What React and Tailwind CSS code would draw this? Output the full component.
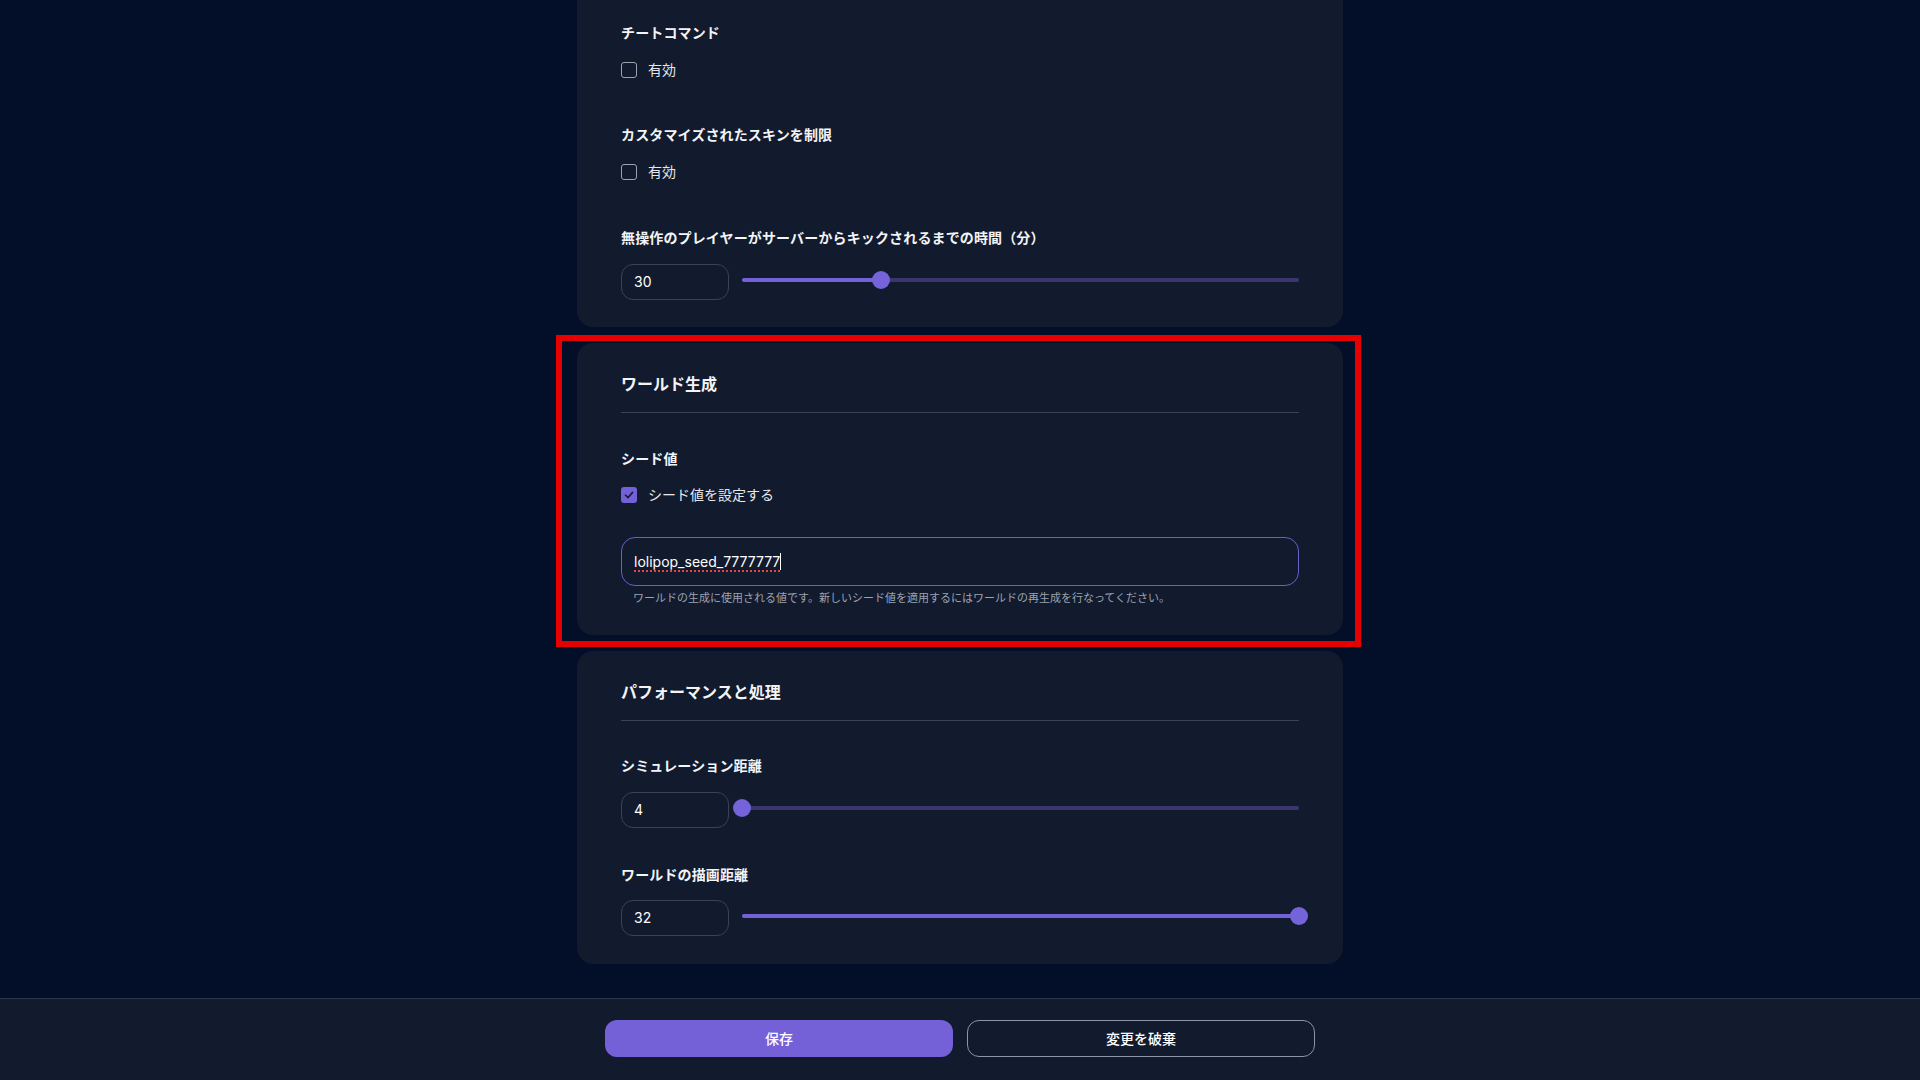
import React, { useState } from 'react';

const FONT = { fontFamily: 'Inter, "Noto Sans CJK JP", sans-serif' };

const Checkbox = ({ checked, onChange, label }) => (
  <label className="flex items-center gap-[11px] h-5 cursor-pointer select-none">
    <span
      onClick={onChange}
      className={
        checked
          ? "w-4 h-4 rounded-[3px] bg-[#7461d8] flex items-center justify-center"
          : "w-4 h-4 rounded-[3px] border-[1.5px] border-[#9ca3af]"
      }
    >
      {checked && (
        <svg width="12" height="12" viewBox="0 0 12 12" fill="none">
          <path d="M2.5 6.2 L5 8.6 L9.6 3.4" stroke="#1b1c3a" strokeWidth="1.6" strokeLinecap="round" strokeLinejoin="round" />
        </svg>
      )}
    </span>
    <span className="text-sm leading-5 text-[#e5e7eb]">{label}</span>
  </label>
);

const Slider = ({ value, min, max }) => {
  const pct = ((value - min) / (max - min)) * 100;
  return (
    <div className="relative flex-1 h-[18px] flex items-center ml-[13px] mb-1">
      <div className="w-full h-1 rounded-full bg-[#3a3770]" />
      <div className="absolute left-0 h-1 rounded-full bg-[#7461d8]" style={{ width: `${pct}%` }} />
      <div
        className="absolute top-1/2 w-[18px] h-[18px] rounded-full bg-[#7563d9] -translate-x-1/2 -translate-y-1/2"
        style={{ left: `${pct}%` }}
      />
    </div>
  );
};

const NumberSlider = ({ value, min, max }) => (
  <div className="flex items-center">
    <div className="w-[108px] h-9 rounded-xl border border-[#394256] px-3 flex items-center text-sm text-white">
      {value}
    </div>
    <Slider value={value} min={min} max={max} />
  </div>
);

const Label = ({ children }) => (
  <div className="text-sm leading-5 font-bold text-[#f3f4f6] tracking-[0.01em]">{children}</div>
);

const CardTitle = ({ children }) => (
  <div className="pb-4 border-b border-[#394154]">
    <h2 className="text-base leading-6 font-bold text-[#f3f4f6]">{children}</h2>
  </div>
);

export default function App() {
  const [cheats, setCheats] = useState(false);
  const [skins, setSkins] = useState(false);
  const [useSeed, setUseSeed] = useState(true);

  return (
    <div className="h-screen flex flex-col bg-[#030e29] overflow-hidden" style={FONT}>
      <main className="flex-1 overflow-hidden">
        <div className="w-[766px] mx-auto flex flex-col gap-4">
          {/* Game rules (scrolled) */}
          <section className="bg-[#121a2e] rounded-b-2xl px-11 pt-[23px] pb-[27px]">
            <Label>チートコマンド</Label>
            <div className="mt-[17px]">
              <Checkbox checked={cheats} onChange={() => setCheats(!cheats)} label="有効" />
            </div>
            <div className="mt-[45px]">
              <Label>カスタマイズされたスキンを制限</Label>
            </div>
            <div className="mt-[17px]">
              <Checkbox checked={skins} onChange={() => setSkins(!skins)} label="有効" />
            </div>
            <div className="mt-[46px]">
              <Label>無操作のプレイヤーがサーバーからキックされるまでの時間（分）</Label>
            </div>
            <div className="mt-4">
              <NumberSlider value={30} min={0} max={120} />
            </div>
          </section>

          {/* World generation */}
          <section className="relative bg-[#121a2e] rounded-2xl px-11 pt-[29px] pb-[29px]">
            <div className="absolute -left-[21px] -right-[18px] -top-[8px] -bottom-[12px] border-[6px] border-[#e60000] pointer-events-none" />
            <CardTitle>ワールド生成</CardTitle>
            <div className="mt-9">
              <Label>シード値</Label>
            </div>
            <div className="mt-4">
              <Checkbox checked={useSeed} onChange={() => setUseSeed(!useSeed)} label="シード値を設定する" />
            </div>
            <div className="mt-8 h-[49px] rounded-[14px] border border-[#6660c9] px-3 flex items-center text-sm text-white">
              <span className="underline decoration-dotted decoration-[#e0453e] decoration-[1.5px] underline-offset-[4px]">lolipop_seed_7777777</span>
              <span className="w-px h-[17px] bg-white" />
            </div>
            <p className="mt-1 px-3 text-[11px] leading-4 text-[#9ca3af]">
              ワールドの生成に使用される値です。新しいシード値を適用するにはワールドの再生成を行なってください。
            </p>
          </section>

          {/* Performance */}
          <section className="bg-[#121a2e] rounded-2xl px-11 pt-[29px] pb-7">
            <CardTitle>パフォーマンスと処理</CardTitle>
            <div className="mt-[35px]">
              <Label>シミュレーション距離</Label>
            </div>
            <div className="mt-4">
              <NumberSlider value={4} min={4} max={32} />
            </div>
            <div className="mt-[37px]">
              <Label>ワールドの描画距離</Label>
            </div>
            <div className="mt-[15px]">
              <NumberSlider value={32} min={4} max={32} />
            </div>
          </section>
        </div>
      </main>

      <footer className="h-[82px] shrink-0 bg-[#121a2e] border-t border-[#2c3549] flex justify-center gap-[14px] pt-[21px]">
        <button className="w-[348px] h-[37px] rounded-xl bg-[#7461d8] text-sm font-medium text-white">保存</button>
        <button className="w-[348px] h-[37px] rounded-xl border border-[#8d94a5] text-sm font-medium text-white">変更を破棄</button>
      </footer>
    </div>
  );
}
